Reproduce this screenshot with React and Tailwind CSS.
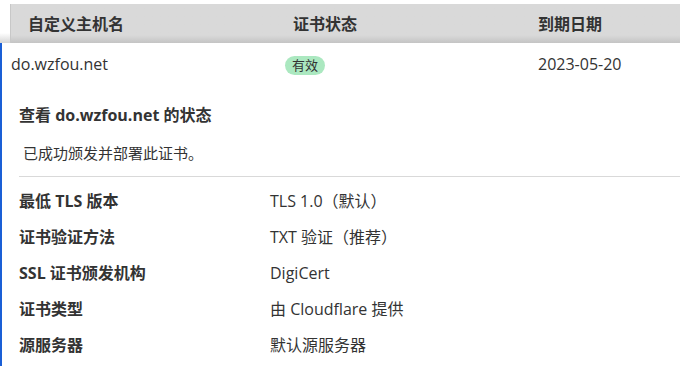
export default function App() {
  const rows = [
    ["最低 TLS 版本", "TLS 1.0（默认）"],
    ["证书验证方法", "TXT 验证（推荐）"],
    ["SSL 证书颁发机构", "DigiCert"],
    ["证书类型", "由 Cloudflare 提供"],
    ["源服务器", "默认源服务器"],
  ];

  return (
    <div
      className="w-[680px] h-[366px] bg-white text-[#333] overflow-hidden"
      style={{ fontFamily: '"Open Sans", "Noto Sans CJK SC", sans-serif' }}
    >
      {/* table header */}
      <div className="relative pt-[4px] pl-[10px]">
        <div className="flex h-[39px] items-center border-l border-[#c8c8c8] bg-gradient-to-b from-[#d9d9d9] from-[80%] to-[#c4c4c4] text-[16px] font-bold">
          <div className="w-[282px] pl-[17px]">自定义主机名</div>
          <div className="w-[245px]">证书状态</div>
          <div>到期日期</div>
        </div>
        <div className="absolute left-0 bottom-0 w-[10px] h-[10px] bg-gradient-to-b from-white to-[#d6d6d6]" />
      </div>

      <div className="border-l-2 border-[#1a5fd6] h-[323px]">
        {/* row */}
        <div className="flex items-center h-[42px] pl-[9px] text-[16px]">
          <div className="w-[274px]">do.wzfou.net</div>
          <div className="w-[253px]">
            <span className="inline-flex items-center justify-center h-[19px] px-[7px] rounded-full bg-[#abe8c0] text-[13px]">
              有效
            </span>
          </div>
          <div>2023-05-20</div>
        </div>

        {/* details */}
        <div className="pl-[17px] pt-[19px]">
          <div className="text-[16px] font-bold leading-[22px]">查看 do.wzfou.net 的状态</div>
          <div className="mt-[17px] pl-[4px] text-[15px] leading-[20px]">已成功颁发并部署此证书。</div>
          <div className="mt-[13px] h-px bg-[#d9d9d9]" />
          <div className="pt-[6px]">
            {rows.map(([k, v]) => (
              <div key={k} className="flex items-center h-[36px] text-[16px]">
                <div className="w-[251px] font-bold">{k}</div>
                <div>{v}</div>
              </div>
            ))}
          </div>
        </div>
      </div>
    </div>
  );
}
